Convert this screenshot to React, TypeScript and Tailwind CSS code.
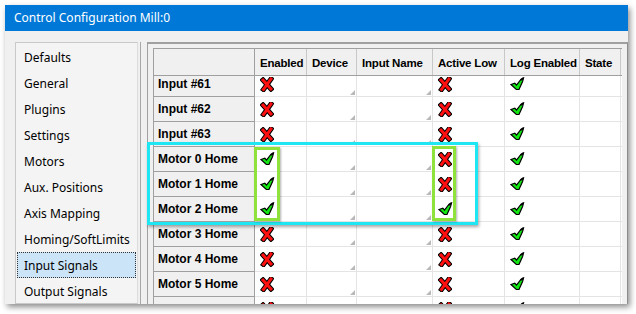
import React from "react";

const XIcon = () => (
  <svg width="14" height="15" viewBox="0 0 14 15">
    <path d="M3 3 L11 12 M11 2 L3.5 12.5" stroke="#000" strokeWidth="5" strokeLinecap="square" fill="none" />
    <path d="M3 3 L11 12 M11 2 L3.5 12.5" stroke="#ff1010" strokeWidth="3" strokeLinecap="square" fill="none" />
  </svg>
);

const CheckIcon = () => (
  <svg width="15" height="14" viewBox="0 0 15 14">
    <path
      d="M1 7.5 L4.8 6.3 L6.5 8 L10.5 3 L13.5 1 L12.6 4.5 L9 12.5 L6.3 12.5 Z"
      fill="#14e614"
      stroke="#000"
      strokeWidth="1.2"
      strokeLinejoin="miter"
    />
    <path d="M10.5 3 L13.5 1" stroke="#000" strokeWidth="1.6" fill="none" />
  </svg>
);

type R = { label: string; en: boolean; al: boolean; log: boolean };
const rows: R[] = [
  { label: "Input #61", en: false, al: false, log: true },
  { label: "Input #62", en: false, al: false, log: true },
  { label: "Input #63", en: false, al: false, log: true },
  { label: "Motor 0 Home", en: true, al: false, log: true },
  { label: "Motor 1 Home", en: true, al: false, log: true },
  { label: "Motor 2 Home", en: true, al: true, log: true },
  { label: "Motor 3 Home", en: false, al: false, log: true },
  { label: "Motor 4 Home", en: false, al: false, log: true },
  { label: "Motor 5 Home", en: false, al: false, log: true },
  { label: "Motor 6 Home", en: false, al: false, log: true },
];

const menu = [
  "Defaults",
  "General",
  "Plugins",
  "Settings",
  "Motors",
  "Aux. Positions",
  "Axis Mapping",
  "Homing/SoftLimits",
  "Input Signals",
  "Output Signals",
];

const Grip = () => (
  <div className="absolute right-[1px] bottom-[1px] w-0 h-0 border-l-[5px] border-l-transparent border-b-[5px] border-b-[#b8b8b8]" />
);

export default function App() {
  const uiFont = { fontFamily: '"Noto Sans", "Open Sans", sans-serif' };
  const gridFont = { fontFamily: '"Liberation Sans", Arial, sans-serif' };
  return (
    <div className="w-[636px] h-[314px] bg-white overflow-hidden relative">
      <div className="ml-[5px] mt-[5px] w-[623px] h-[299px] flex flex-col bg-[#f0f0f0] shadow-[2px_3px_6px_rgba(0,0,0,0.45)] overflow-hidden">
        <div
          className="h-[26px] shrink-0 bg-[#0078d7] text-white text-[12px] flex items-center pl-[9px]"
          style={uiFont}
        >
          Control Configuration Mill:0
        </div>
        <div className="flex flex-1 min-h-0">
          <div className="ml-[10px] mt-[11px] w-[123px] shrink-0 border border-[#c9c9c9] border-r-[#dcdcdc] bg-[#f4f4f4] pt-[1px] px-[1px] overflow-hidden" style={uiFont}>
            {menu.map((m) => (
              <div
                key={m}
                className={
                  "h-[26px] flex items-center pl-[7px] pt-[2px] text-[12px] text-black " +
                  (m === "Input Signals"
                    ? "bg-[#cce4f7] outline-1 outline-dotted outline-[#333] -outline-offset-1"
                    : "")
                }
              >
                {m}
              </div>
            ))}
          </div>
          <div className="w-[1px] mt-[11px] bg-[#a8a8a8] ml-[2px]" />
          <div className="ml-[6px] mt-[11px] flex-1 border-t-2 border-l border-r border-[#a0a0a0] border-r-[#8c8c8c] pl-[5px] pt-[4px] pr-[5px] overflow-hidden" style={gridFont}>
            <div className="border-l border-t border-[#a0a0a0] bg-white h-full overflow-hidden text-[12px] font-bold text-black">
              <div className="flex h-[27px] bg-[#f0f0f0] border-b border-[#a0a0a0] relative z-10 text-[11.5px]">
                <div className="w-[101px] border-r border-[#a0a0a0]" />
                {[
                  ["Enabled", "w-[52px]"],
                  ["Device", "w-[50px]"],
                  ["Input Name", "w-[76px]"],
                  ["Active Low", "w-[72px]"],
                  ["Log Enabled", "w-[75px]"],
                  ["State", "w-[41px]"],
                ].map(([t, w]) => (
                  <div key={t} className={w + " border-r border-[#c8c8c8] flex items-center pl-[5px] pt-[3px] whitespace-nowrap tracking-[-0.2px]"}>
                    {t}
                  </div>
                ))}
              </div>
              <div className="-mt-[4px]">
                {rows.map((r) => (
                  <div key={r.label} className="flex h-[25px]">
                    <div className="w-[101px] bg-[#f0f0f0] border-r border-b border-[#a0a0a0] flex items-center pl-[4px] whitespace-nowrap">
                      {r.label}
                    </div>
                    <div className="w-[52px] border-r border-b border-[#e4e4e4] flex items-center pl-[5px]">
                      {r.en ? <CheckIcon /> : <XIcon />}
                    </div>
                    <div className="w-[50px] border-r border-b border-[#e4e4e4] relative">
                      <Grip />
                    </div>
                    <div className="w-[76px] border-r border-b border-[#e4e4e4] relative">
                      <Grip />
                    </div>
                    <div className="w-[72px] border-r border-b border-[#e4e4e4] flex items-center pl-[5px]">
                      {r.al ? <CheckIcon /> : <XIcon />}
                    </div>
                    <div className="w-[75px] border-r border-b border-[#e4e4e4] flex items-center pl-[5px]">
                      {r.log ? <CheckIcon /> : <XIcon />}
                    </div>
                    <div className="w-[41px] border-r border-b border-[#e4e4e4]" />
                    <div className="flex-1 border-b border-[#e4e4e4]" />
                  </div>
                ))}
              </div>
            </div>
          </div>
        </div>
      </div>
      <div className="absolute left-[147px] top-[142px] w-[331px] h-[83px] border-[3px] border-[#1ee6f2] shadow-[1px_2px_3px_rgba(0,0,0,0.35)]" />
      <div className="absolute left-[254px] top-[147px] w-[26px] h-[74px] border-[3px] border-[#8fe13c] shadow-[1px_1px_2px_rgba(0,0,0,0.3)]" />
      <div className="absolute left-[432px] top-[146px] w-[24px] h-[75px] border-[3px] border-[#8fe13c] shadow-[1px_1px_2px_rgba(0,0,0,0.3)]" />
    </div>
  );
}
